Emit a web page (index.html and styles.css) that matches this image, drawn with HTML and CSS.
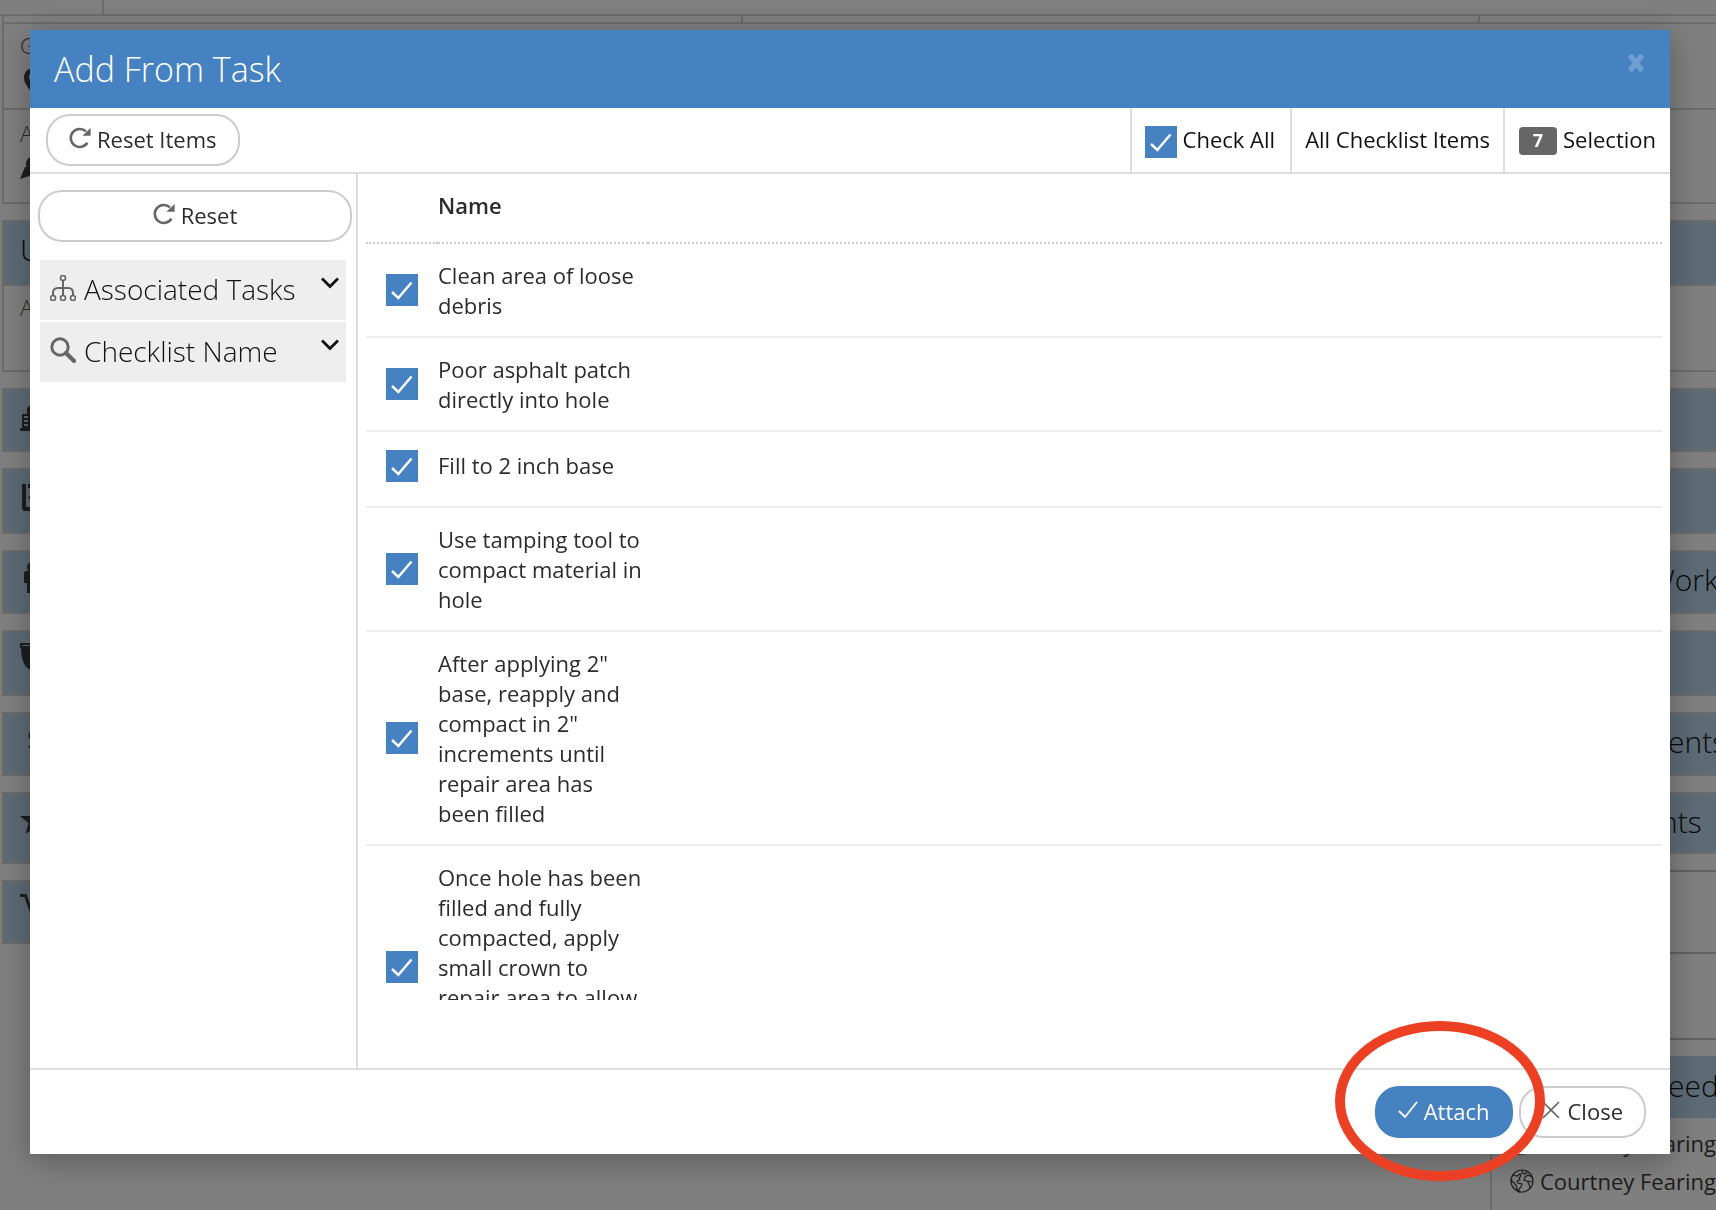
FILE: index.html
```html
<!DOCTYPE html>
<html lang="en">
<head>
<meta charset="utf-8">
<meta name="viewport" content="width=device-width, initial-scale=1">
<title>Add From Task</title>
<link rel="stylesheet" href="styles.css">
</head>
<body>
<svg class="sprite" aria-hidden="true">
  <symbol id="i-redo" viewBox="0 0 22 22"><path d="M18.4 15.8A9 9 0 1 1 17 4.4" fill="none" stroke="currentColor" stroke-width="2.6"/><path d="M21.6 1v7.8h-8.2z" fill="currentColor"/></symbol>
  <symbol id="i-chevron" viewBox="0 0 18 12"><path d="M1 1.5l8 8 8-8" fill="none" stroke="currentColor" stroke-width="2.8"/></symbol>
  <symbol id="i-globe" viewBox="0 0 24 24"><g fill="none" stroke="currentColor" stroke-width="1.2"><circle cx="12" cy="12" r="11"/><path d="M3 6l4 1 3-2 1 2-2 2 1 2-3 1 1 2 4 1-1 3-2 2v3l-2-3-1-4-3-3-2-2M13 1l-1 3 3 1 2-2M22 8l-4-2-3 2-1 3 3 1 2 3 1 4M18 12l4 1"/></g></symbol>
</svg>

<main class="page" aria-hidden="true">
  <div class="tabs"><span class="tab"></span></div>
  <section class="info">
    <div class="strip"><div></div><div></div><div></div></div>
    <div class="field tall">
      <span class="caption">G</span>
      <svg class="pin" viewBox="0 0 20 28"><path fill-rule="evenodd" d="M10 0C4 0 0 4 0 10c0 5 4 9 10 18 6-9 10-13 10-18C20 4 16 0 10 0zm0 4a5 5 0 1 1 0 10 5 5 0 0 1 0-10z"/></svg>
    </div>
    <div class="field">
      <span class="caption">A</span>
      <svg class="map" viewBox="0 0 28 24"><path d="M5 11h5l4 6 4-6h5l5 12-9-3-5 3-5-3-9 3z"/><path fill-rule="evenodd" d="M14 0a8 8 0 0 0-8 8c0 3 3 6 8 13 5-7 8-10 8-13a8 8 0 0 0-8-8zm0 4a4 4 0 1 1 0 8 4 4 0 0 1 0-8z"/></svg>
    </div>
  </section>
  <div class="columns">
    <div class="column">
      <section class="card group"><h2>U</h2><div class="group-body"><span class="caption">A</span></div></section>
      <section class="card"><svg viewBox="0 0 32 32"><path fill-rule="evenodd" d="M0 26h2V12h5V6l5-4h8v24h12v3H0zM4 14v2h4v-2zm0 4v2h4v-2zm0 4v2h4v-2z"/></svg></section>
      <section class="card big"><svg viewBox="0 0 32 32"><path fill-rule="evenodd" d="M2 2h4v23h20V2h4v24q0 3-3 3H5q-3 0-3-3zM8 2h14v4H8zm5 9v9l-5-4.5z"/></svg></section>
      <section class="card"><svg viewBox="0 0 32 32"><circle cx="12" cy="3" r="5"/><path d="M6 7h12q3 0 3 3v9h-3v10h-5v-9h-1v9H7V19H4v-9q0-3 2-3z"/></svg></section>
      <section class="card big"><svg viewBox="0 0 32 32"><path fill-rule="evenodd" d="M0-1h32v5h-1c0 14-5 23-15 23S1 18 1 4H0zM2 1v1h28V1z"/></svg></section>
      <section class="card"><svg viewBox="0 0 32 32"><path d="M22 8c-3-4-12-4-12 2 0 7 11 3 11 9 0 4-8 5-12 1" fill="none" stroke="currentColor" stroke-width="3"/></svg></section>
      <section class="card high"><svg class="star" viewBox="0 0 28 28"><path d="M14 0l3.5 10H28l-8.5 7 3 11-8.5-6-8.500 6 3-11L0 10h10.500z"/></svg></section>
      <section class="card"><svg viewBox="0 0 32 32"><path d="M0 1.5h5.500l6 17H28" fill="none" stroke="currentColor" stroke-width="3"/><circle cx="15" cy="25" r="3"/></svg></section>
    </div>
    <div class="column side">
      <section class="card group"><h2></h2><div class="group-body"></div></section>
      <section class="card"></section>
      <section class="card big"></section>
      <section class="card work"><h2>Work</h2></section>
      <section class="card big"></section>
      <section class="card"><h2>ents</h2></section>
      <section class="card short"><h2>nts</h2></section>
      <section class="boxes"><div></div><div></div></section>
      <section class="people">
        <h2>eed</h2>
        <ul>
          <li><svg><use href="#i-globe"/></svg>Courtney Fearing</li>
          <li><svg><use href="#i-globe"/></svg>Courtney Fearing</li>
        </ul>
      </section>
    </div>
  </div>
</main>

<div class="backdrop"></div>

<div class="modal" role="dialog" aria-labelledby="title">
  <header class="modal-header">
    <h1 id="title">Add From Task</h1>
    <button class="dismiss" type="button" aria-label="Dismiss"><svg viewBox="0 0 16 18"><path d="M3.500 3.500l9 11M12.500 3.500l-9 11" stroke="currentColor" stroke-width="5.500" fill="none" stroke-linecap="square"/></svg></button>
  </header>

  <div class="toolbar">
    <button class="btn" type="button"><svg class="redo"><use href="#i-redo"/></svg>Reset Items</button>
    <div class="filters">
      <label class="filter check-all"><input class="check" type="checkbox" checked>Check All</label>
      <a class="filter" href="#all">All Checklist Items</a>
      <a class="filter selection" href="#selection"><span class="badge">7</span>Selection</a>
    </div>
  </div>

  <div class="modal-body">
    <aside class="sidebar">
      <button class="btn" type="button"><svg class="redo"><use href="#i-redo"/></svg>Reset</button>
      <div class="accordion">
        <button class="panel" type="button">
          <svg class="panel-icon" viewBox="0 0 26 26"><g fill="none" stroke="currentColor" stroke-width="1.6"><circle cx="13" cy="3" r="2.500"/><circle cx="3" cy="23" r="2.500"/><circle cx="13" cy="23" r="2.500"/><circle cx="23" cy="23" r="2.500"/></g><path d="M13 6v14M3 20v-2q0-5 5-5h10q5 0 5 5v2" fill="none" stroke="currentColor" stroke-width="2"/></svg>
          <span>Associated Tasks</span><svg class="chevron"><use href="#i-chevron"/></svg>
        </button>
        <button class="panel" type="button">
          <svg class="panel-icon" viewBox="0 0 26 26"><circle cx="10" cy="10" r="8.200" fill="none" stroke="currentColor" stroke-width="3"/><path d="M16 16l8 8" stroke="currentColor" stroke-width="4.200" stroke-linecap="round"/></svg>
          <span>Checklist Name</span><svg class="chevron"><use href="#i-chevron"/></svg>
        </button>
      </div>
    </aside>

    <div class="list">
      <table>
        <colgroup><col class="c-check"><col class="c-name"><col></colgroup>
        <thead><tr><th></th><th scope="col">Name</th><th></th></tr></thead>
        <tbody>
          <tr><td><input class="check" type="checkbox" id="c1" checked></td><td><label for="c1">Clean area of loose debris</label></td><td></td></tr>
          <tr><td><input class="check" type="checkbox" id="c2" checked></td><td><label for="c2">Poor asphalt patch directly into hole</label></td><td></td></tr>
          <tr class="single"><td><input class="check" type="checkbox" id="c3" checked></td><td><label for="c3">Fill to 2 inch base</label></td><td></td></tr>
          <tr><td><input class="check" type="checkbox" id="c4" checked></td><td><label for="c4">Use tamping tool to compact material in hole</label></td><td></td></tr>
          <tr><td><input class="check" type="checkbox" id="c5" checked></td><td><label for="c5">After applying 2" base, reapply and compact in 2" increments until repair area has been filled</label></td><td></td></tr>
          <tr class="long"><td><input class="check" type="checkbox" id="c6" checked></td><td><label for="c6">Once hole has been filled and fully compacted, apply small crown to repair area to allow</label></td><td></td></tr>
        </tbody>
      </table>
    </div>
  </div>

  <footer class="modal-footer">
    <button class="btn primary" type="button"><svg class="tick" viewBox="0 0 20 18"><path d="M1 10l6 6L19 1" fill="none" stroke="currentColor" stroke-width="1.8"/></svg>Attach</button>
    <button class="btn" type="button"><svg class="cross" viewBox="0 0 18 18"><path d="M1 1l16 16M17 1L1 17" fill="none" stroke="currentColor" stroke-width="1.6"/></svg>Close</button>
  </footer>
</div>

<div class="ring"></div>
</body>
</html>
```

FILE: styles.css
```css
* { box-sizing: border-box; }

body {
  margin: 0;
  height: 100vh;
  overflow: hidden;
  background: #fff;
  color: #2c2c2c;
  font: 400 22px/30px "Open Sans", sans-serif;
}

h1, h2, ul { margin: 0; padding: 0; }
h1, h2 { font-weight: 300; }
button { font: inherit; color: inherit; cursor: pointer; }
a { color: inherit; text-decoration: none; }
.sprite { position: absolute; width: 0; height: 0; }

/* Page behind the dialog */
.page { height: 100vh; overflow: hidden; color: #3c3c3c; }
.page svg { fill: currentColor; overflow: visible; }

.tabs { height: 16px; border-bottom: 2px solid #d8d8d8; }
.tab { display: block; width: 104px; height: 14px; border-right: 2px solid #d8d8d8; }

.info { margin-left: 2px; border-left: 2px solid #d8d8d8; }
.strip { display: grid; grid-template-columns: 1fr 1fr 238px; height: 8px; border-bottom: 2px solid #d8d8d8; }
.strip div + div { border-left: 2px solid #d8d8d8; }
.field { display: flex; flex-direction: column; gap: 8px; height: 94px; padding: 8px 16px; border-bottom: 2px solid #d8d8d8; }
.field.tall { height: 86px; padding-top: 6px; }
.caption { font-weight: 300; color: #555; }
.pin { width: 20px; height: 28px; margin-left: 4px; }
.map { width: 28px; height: 24px; }

.columns { display: grid; grid-template-columns: minmax(0, 1fr) 226px; gap: 20px; margin: 16px 0 0 2px; }
.column { display: flex; flex-direction: column; gap: 16px; min-width: 0; }
.card {
  height: 64px;
  padding: 12px 16px;
  background: #bad6ec;
  border: 2px solid #d8d8d8;
  border-right: 0;
}
.card svg { width: 32px; height: 32px; }
.card .star { width: 28px; height: 28px; }
.card.big { height: 66px; }
.card.high { height: 72px; }
.card.short { height: 62px; }
.card.group { height: 152px; padding: 0; }
.card.group h2 { height: 64px; padding: 8px 16px; border-bottom: 2px solid #d8d8d8; }
.group-body { height: 84px; padding: 6px 16px; background: #fff; }
.page h2 { font-size: 30px; line-height: 40px; color: #111; white-space: nowrap; }
.side .card { padding: 8px 0 8px 176px; }
.side .card.work { padding-left: 156px; }
.side .card.short { padding-left: 168px; }
.side .card.group { padding: 0; }
.boxes { height: 170px; border: solid #c4c4c4; border-width: 2px 0; }
.boxes div { height: 80px; }
.boxes div + div { border-top: 2px solid #c4c4c4; }
.people { border-left: 2px solid #d8d8d8; }
.people h2 { height: 62px; padding: 10px 0 10px 176px; background: #bad6ec; }
.people ul { padding: 6px 0 12px 18px; list-style: none; border-bottom: 2px solid #d8d8d8; }
.people li { display: flex; align-items: center; gap: 6px; height: 38px; white-space: nowrap; }
.people svg { flex: none; width: 24px; height: 24px; }

.backdrop { position: fixed; inset: 0; background: rgba(0, 0, 0, .5); }

/* Dialog */
.modal {
  position: fixed;
  inset: 30px 46px 56px 30px;
  display: flex;
  flex-direction: column;
  background: #fff;
  box-shadow: 0 6px 30px rgba(0, 0, 0, .3);
}
.modal-header {
  display: flex;
  justify-content: space-between;
  align-items: flex-start;
  height: 78px;
  padding: 15px 26px 0 24px;
  background: #4682c2;
  color: #fff;
}
.modal-header h1 { font-size: 34px; line-height: 48px; }
.dismiss { display: flex; margin-top: 9px; padding: 0; border: 0; background: none; color: #6f9ed1; }
.dismiss svg { width: 16px; height: 18px; }

.toolbar { display: flex; justify-content: space-between; height: 66px; padding-left: 16px; border-bottom: 2px solid #ddd; }
.toolbar .btn { margin-top: 6px; }

.btn {
  display: inline-flex;
  align-items: center;
  justify-content: center;
  gap: 6px;
  height: 52px;
  padding: 0 21px 2px;
  border: 2px solid #ccc;
  border-radius: 24px;
  background: #fff;
}
.redo { width: 22px; height: 22px; color: #666; margin-bottom: 2px; }

.filters { display: flex; color: #111; }
.filter { display: flex; align-items: center; padding: 0 13px 2px; border-left: 2px solid #ddd; }
.check-all { gap: 6px; padding: 0 15px 2px 13px; }
.check-all .check { margin-top: 6px; }
.selection { gap: 6px; padding: 0 14px 2px; }
.badge {
  width: 38px;
  height: 28px;
  margin-top: 4px;
  border-radius: 4px;
  background: #666;
  color: #fff;
  font-size: 18px;
  font-weight: 700;
  line-height: 26px;
  text-align: center;
}

.check {
  appearance: none;
  display: block;
  flex: none;
  width: 32px;
  height: 32px;
  margin: 0;
  background: #4682c2;
}
.check:checked {
  background-image: url("data:image/svg+xml,%3Csvg xmlns='http://www.w3.org/2000/svg' viewBox='0 0 32 32'%3E%3Cpath d='M6 18l6.300 6L25.500 8.500' fill='none' stroke='white' stroke-width='2.500'/%3E%3C/svg%3E");
}

.modal-body { display: flex; flex: 1; min-height: 0; }
.sidebar { display: flex; flex-direction: column; gap: 18px; width: 328px; padding: 16px 4px 0 8px; border-right: 2px solid #ddd; }
.accordion { display: flex; flex-direction: column; gap: 2px; margin: 0 6px 0 2px; }
.panel {
  display: flex;
  align-items: center;
  gap: 8px;
  height: 60px;
  padding: 0 7px 2px 10px;
  border: 0;
  background: #eee;
  color: #111;
  font-size: 28px;
  font-weight: 300;
  line-height: 40px;
  text-align: left;
}
.panel span { flex: 1; white-space: nowrap; }
.panel-icon { flex: none; width: 26px; height: 26px; color: #666; margin-bottom: 2px; }
.chevron { flex: none; width: 18px; height: 12px; margin-bottom: 12px; }

.list { flex: 1; margin-bottom: 68px; padding: 0 8px; overflow: hidden; }
table { width: 100%; border-collapse: separate; border-spacing: 0; table-layout: fixed; }
.c-check { width: 72px; }
.c-name { width: 210px; }
th { height: 70px; padding: 0 0 6px; border-bottom: 2px dotted #ccc; font-weight: 600; text-align: left; }
td { padding: 16px 0; border-bottom: 2px solid #eee; vertical-align: top; }
td:first-child { padding-left: 20px; vertical-align: middle; }
.single td { height: 76px; padding-top: 18px; padding-bottom: 24px; }
.long td { height: 244px; }

.modal-footer { display: flex; justify-content: flex-end; gap: 6px; height: 86px; padding: 16px 24px; border-top: 2px solid #ddd; }
.primary { border-color: #4682c2; background: #4682c2; color: #fff; }
.tick { width: 20px; height: 18px; margin-bottom: 2px; }
.cross { width: 18px; height: 18px; margin: 0 2px 2px 0; color: #666; }

/* Marker around the Attach button */
.ring {
  position: fixed;
  right: 171px;
  bottom: 29px;
  width: 210px;
  height: 160px;
  border: 10px solid #ec4024;
  border-radius: 50%;
  pointer-events: none;
}
```
